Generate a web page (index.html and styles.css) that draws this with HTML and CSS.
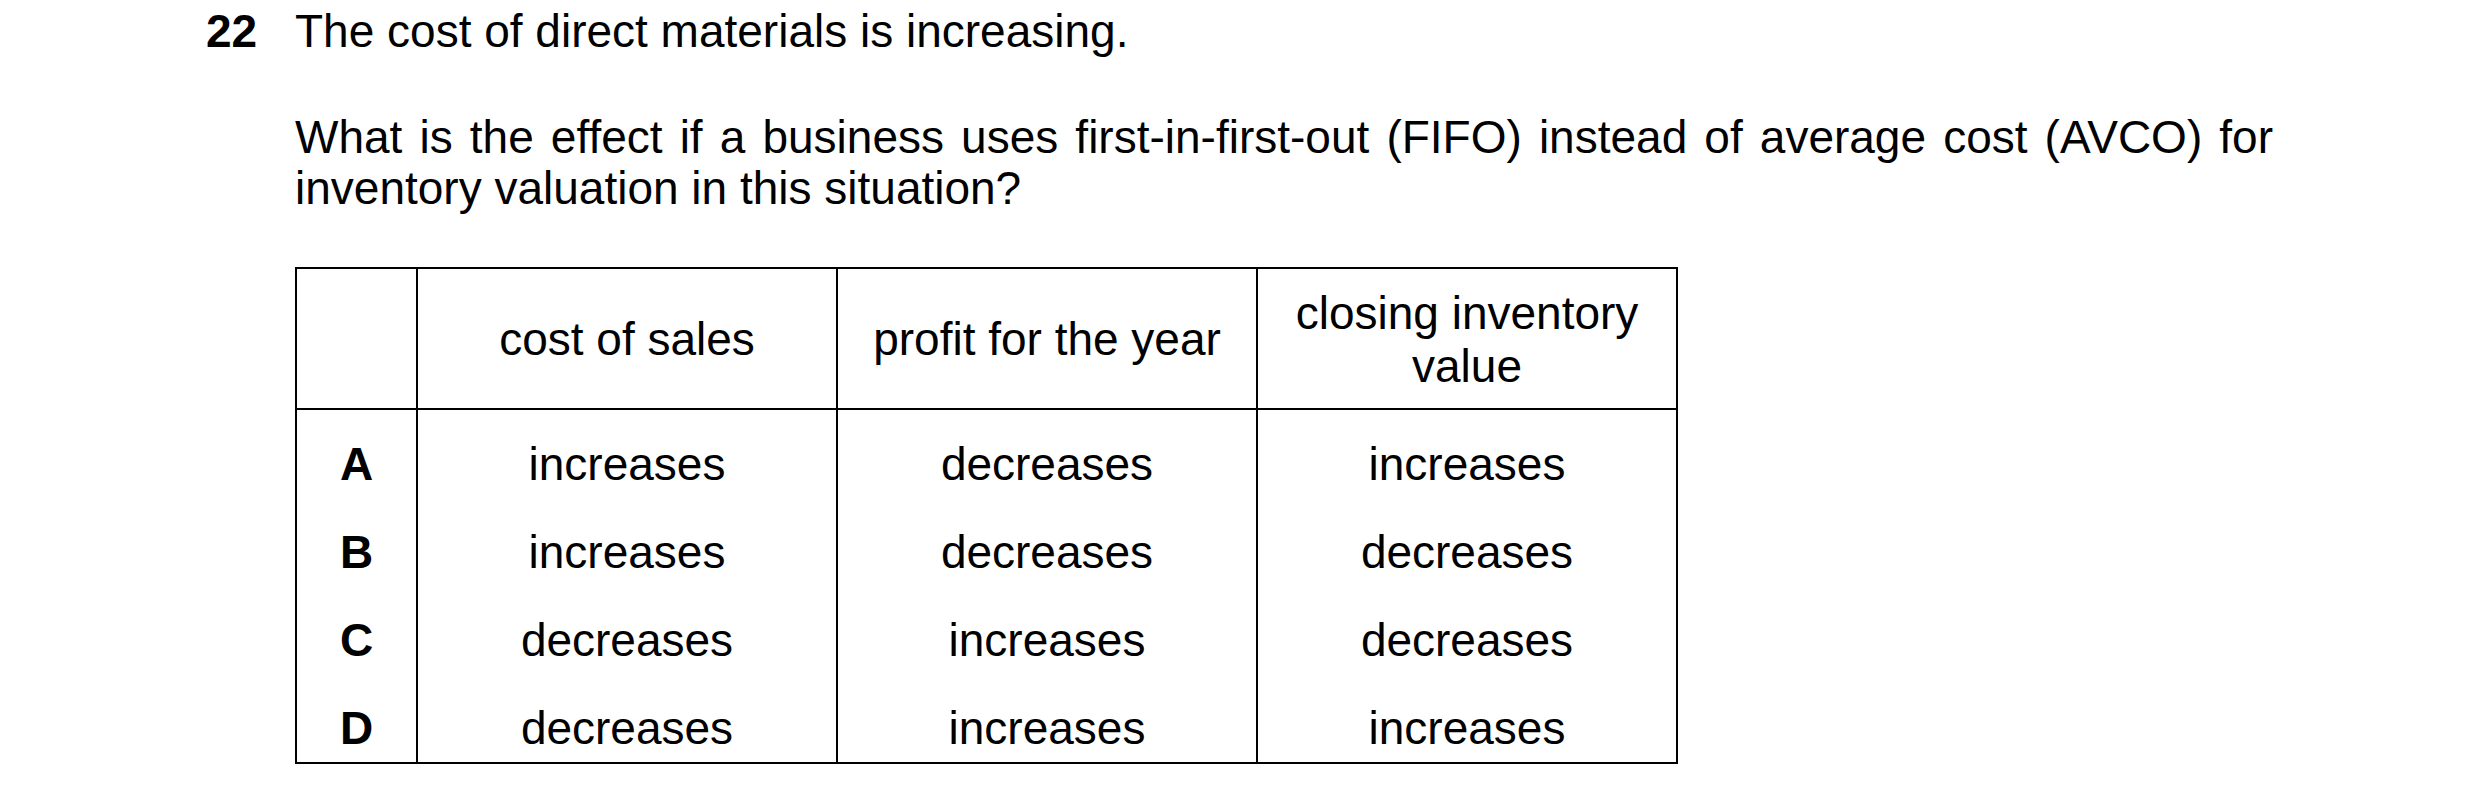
FILE: index.html
```html
<!DOCTYPE html>
<html lang="en">
<head>
<meta charset="utf-8">
<title>Question 22</title>
<link rel="stylesheet" href="styles.css">
</head>
<body>
<div class="question">
  <div class="qnum">22</div>
  <div class="qbody">
    <p class="stem">The cost of direct materials is increasing.</p>
    <p class="prompt">What is the effect if a business uses first-in-first-out (FIFO) instead of average cost (AVCO) for inventory valuation in this situation?</p>
    <table class="options">
      <colgroup>
        <col class="c-letter">
        <col class="c-val">
        <col class="c-val">
        <col class="c-val">
      </colgroup>
      <thead>
        <tr>
          <th></th>
          <th>cost of sales</th>
          <th>profit for the year</th>
          <th>closing inventory<br>value</th>
        </tr>
      </thead>
      <tbody>
        <tr><td class="letter">A</td><td>increases</td><td>decreases</td><td>increases</td></tr>
        <tr><td class="letter">B</td><td>increases</td><td>decreases</td><td>decreases</td></tr>
        <tr><td class="letter">C</td><td>decreases</td><td>increases</td><td>decreases</td></tr>
        <tr><td class="letter">D</td><td>decreases</td><td>increases</td><td>increases</td></tr>
      </tbody>
    </table>
  </div>
</div>
</body>
</html>
```

FILE: styles.css
```css
html, body {
  margin: 0;
  padding: 0;
  background: #fff;
}
body {
  font-family: "Liberation Sans", Arial, sans-serif;
  color: #000;
}
.question {
  display: flex;
  padding-top: 6px;
}
.qnum {
  width: 89px;
  margin-left: 206px;
  font-weight: bold;
  font-size: 46px;
  line-height: 51px;
}
.qbody {
  width: 1978px;
  font-size: 46px;
  line-height: 51px;
}
.stem {
  margin: 0;
}
.prompt {
  margin: 55px 0 0 0;
  text-align: justify;
}
.options {
  margin-top: 53px;
  border-collapse: collapse;
  border: 2px solid #000;
  width: 1382px;
  table-layout: fixed;
  font-size: 46px;
  line-height: 53px;
}
.c-letter { width: 121px; }
.c-val { width: 420px; }
.options th, .options td {
  border-left: 2px solid #000;
  border-right: 2px solid #000;
  text-align: center;
  padding: 0;
}
.options th {
  font-weight: normal;
  height: 137px;
  padding-top: 2px;
  border-bottom: 2px solid #000;
  vertical-align: middle;
}
.options td {
  padding: 28px 0 7px;
}
.options td.letter {
  font-weight: bold;
}
```
